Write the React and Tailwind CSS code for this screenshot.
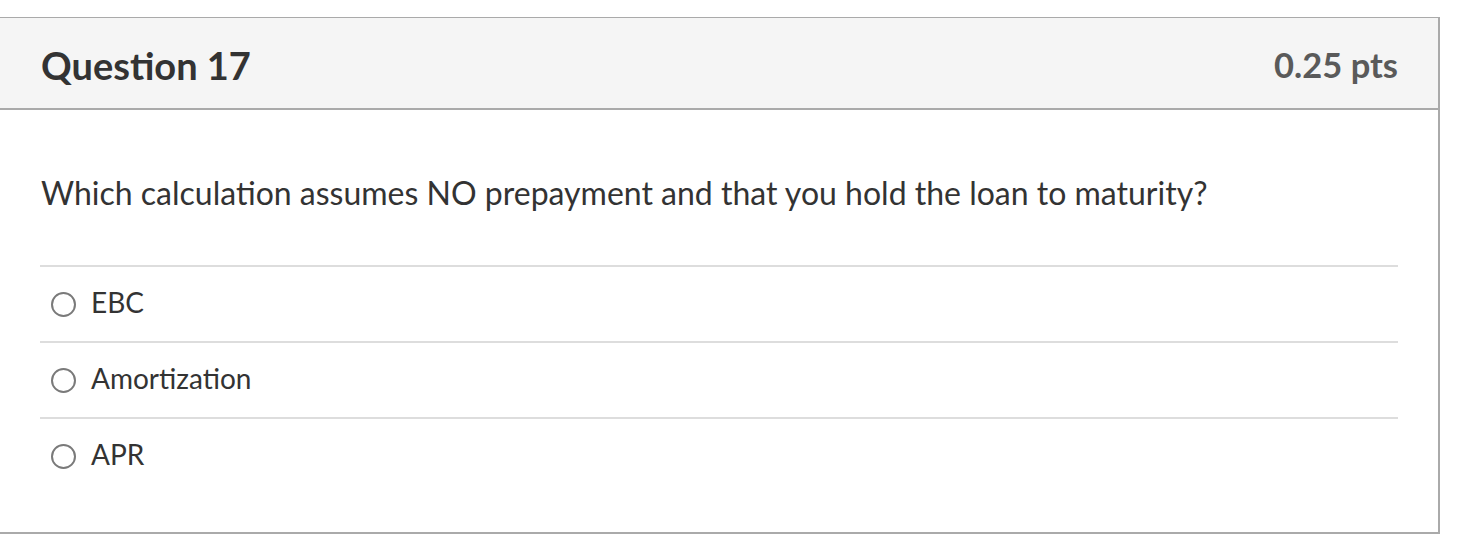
import React from 'react';

const options = ['EBC', 'Amortization', 'APR'];

export default function App() {
  return (
    <div className="bg-white w-[1458px] h-[534px] pt-[17px] font-['Lato','Liberation_Sans',sans-serif] text-[#333]">
      <div className="w-[1440px] h-[517px] border-t border-r-2 border-b-2 border-[#aaaaaa] flex flex-col">
        {/* header */}
        <div className="h-[92px] pt-[4px] bg-[#f5f5f5] border-b-2 border-[#aaaaaa] flex items-center justify-between pl-[41px] pr-[40px]">
          <h2 className="text-[38px] font-bold text-[#333]">Question 17</h2>
          <span className="text-[34.5px] font-bold text-[#5a5a5a]">0.25 pts</span>
        </div>
        {/* body */}
        <div className="px-[40px] flex flex-col">
          <div className="h-[155px] pt-[10px] flex items-center pl-[1px]">
            <p className="text-[32px]">
              Which calculation assumes NO prepayment and that you hold the loan to maturity?
            </p>
          </div>
          {options.map((opt) => (
            <label
              key={opt}
              className="h-[76px] border-t-2 border-[#dddddd] flex items-center pl-[11px] gap-[15px]"
            >
              <span className="w-[25px] h-[25px] rounded-full border-2 border-[#7a7a7a] bg-white" />
              <span className="text-[28px] -mt-[4px]">{opt}</span>
            </label>
          ))}
        </div>
      </div>
    </div>
  );
}
